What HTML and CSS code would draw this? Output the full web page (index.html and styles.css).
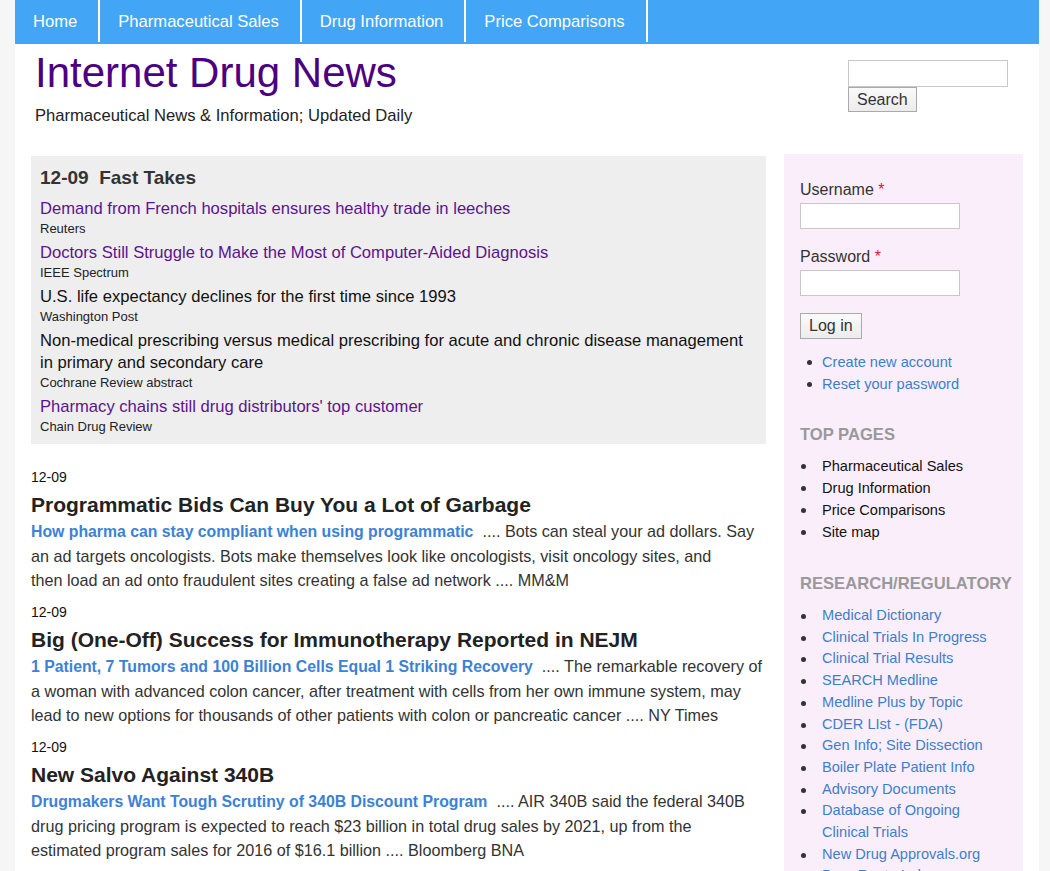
FILE: index.html
```html
<!DOCTYPE html>
<html lang="en">
<head>
<meta charset="utf-8">
<title>Internet Drug News</title>
<link rel="stylesheet" href="styles.css">
</head>
<body>
<div class="page">
  <nav class="topnav">
    <a class="nav-item" href="#">Home</a>
    <a class="nav-item" href="#">Pharmaceutical Sales</a>
    <a class="nav-item" href="#">Drug Information</a>
    <a class="nav-item" href="#">Price Comparisons</a>
  </nav>
  <header class="header">
    <div class="branding">
      <h1 class="site-name">Internet Drug News</h1>
      <p class="slogan">Pharmaceutical News &amp; Information; Updated Daily</p>
    </div>
    <form class="search">
      <input class="search-input" type="text">
      <button class="btn btn-search" type="button">Search</button>
    </form>
  </header>
  <div class="layout">
    <main class="main">
      <section class="fast-takes">
        <h2 class="ft-title">12-09&nbsp;&nbsp;Fast Takes</h2>
        <div class="ft-item">
          <a class="ft-link visited" href="#">Demand from French hospitals ensures healthy trade in leeches</a>
          <div class="ft-source">Reuters</div>
        </div>
        <div class="ft-item">
          <a class="ft-link visited" href="#">Doctors Still Struggle to Make the Most of Computer-Aided Diagnosis</a>
          <div class="ft-source">IEEE Spectrum</div>
        </div>
        <div class="ft-item">
          <a class="ft-link plain" href="#">U.S. life expectancy declines for the first time since 1993</a>
          <div class="ft-source">Washington Post</div>
        </div>
        <div class="ft-item">
          <a class="ft-link plain" href="#">Non-medical prescribing versus medical prescribing for acute and chronic disease management in primary and secondary care</a>
          <div class="ft-source">Cochrane Review abstract</div>
        </div>
        <div class="ft-item">
          <a class="ft-link visited" href="#">Pharmacy chains still drug distributors' top customer</a>
          <div class="ft-source">Chain Drug Review</div>
        </div>
      </section>

      <article class="story">
        <div class="story-date">12-09</div>
        <h3 class="story-title">Programmatic Bids Can Buy You a Lot of Garbage</h3>
        <p class="story-body"><a class="story-link" href="#">How pharma can stay compliant when using programmatic</a>&nbsp; .... Bots can steal your ad dollars. Say<br>an ad targets oncologists. Bots make themselves look like oncologists, visit oncology sites, and<br>then load an ad onto fraudulent sites creating a false ad network .... MM&amp;M</p>
      </article>
      <article class="story">
        <div class="story-date">12-09</div>
        <h3 class="story-title">Big (One-Off) Success for Immunotherapy Reported in NEJM</h3>
        <p class="story-body"><a class="story-link" href="#">1 Patient, 7 Tumors and 100 Billion Cells Equal 1 Striking Recovery</a>&nbsp; .... The remarkable recovery of<br>a woman with advanced colon cancer, after treatment with cells from her own immune system, may<br>lead to new options for thousands of other patients with colon or pancreatic cancer .... NY Times</p>
      </article>
      <article class="story">
        <div class="story-date">12-09</div>
        <h3 class="story-title">New Salvo Against 340B</h3>
        <p class="story-body"><a class="story-link" href="#">Drugmakers Want Tough Scrutiny of 340B Discount Program</a>&nbsp; .... AIR 340B said the federal 340B<br>drug pricing program is expected to reach $23 billion in total drug sales by 2021, up from the<br>estimated program sales for 2016 of $16.1 billion .... Bloomberg BNA</p>
      </article>
    </main>

    <aside class="sidebar">
      <form class="login">
        <label class="field-label">Username <span class="req">*</span></label>
        <input class="field-input" type="text">
        <label class="field-label">Password <span class="req">*</span></label>
        <input class="field-input" type="password">
        <button class="btn btn-login" type="button">Log in</button>
      </form>
      <ul class="side-list narrow">
        <li><a class="side-link" href="#">Create new account</a></li>
        <li><a class="side-link" href="#">Reset your password</a></li>
      </ul>

      <h2 class="side-heading">TOP PAGES</h2>
      <ul class="side-list top-list">
        <li><a class="side-link dark" href="#">Pharmaceutical Sales</a></li>
        <li><a class="side-link dark" href="#">Drug Information</a></li>
        <li><a class="side-link dark" href="#">Price Comparisons</a></li>
        <li><a class="side-link dark" href="#">Site map</a></li>
      </ul>

      <h2 class="side-heading research">RESEARCH/REGULATORY</h2>
      <ul class="side-list research-list">
        <li><a class="side-link" href="#">Medical Dictionary</a></li>
        <li><a class="side-link" href="#">Clinical Trials In Progress</a></li>
        <li><a class="side-link" href="#">Clinical Trial Results</a></li>
        <li><a class="side-link" href="#">SEARCH Medline</a></li>
        <li><a class="side-link" href="#">Medline Plus by Topic</a></li>
        <li><a class="side-link" href="#">CDER LIst - (FDA)</a></li>
        <li><a class="side-link" href="#">Gen Info; Site Dissection</a></li>
        <li><a class="side-link" href="#">Boiler Plate Patient Info</a></li>
        <li><a class="side-link" href="#">Advisory Documents</a></li>
        <li><a class="side-link" href="#">Database of Ongoing Clinical Trials</a></li>
        <li><a class="side-link" href="#">New Drug Approvals.org</a></li>
        <li><a class="side-link" href="#">Drug Route Index</a></li>
      </ul>
    </aside>
  </div>
</div>
</body>
</html>
```
FILE: styles.css
```css
* { box-sizing: border-box; }

html, body {
  margin: 0;
  padding: 0;
}

body {
  background: #f6f6f6;
  font-family: "Liberation Sans", Arial, sans-serif;
  color: #222;
  font-size: 16px;
}

.page {
  width: 1024px;
  margin-left: 15px;
  background: #fff;
  min-height: 900px;
}

/* nav */
.topnav {
  display: flex;
  height: 44px;
  background: #42a5f5;
}

.nav-item {
  display: flex;
  align-items: center;
  padding: 1px 21px 0 18px;
  color: #fff;
  text-decoration: none;
  font-size: 16.6px;
  border-right: 2px solid #fff;
  height: 42px;
}

/* header */
.header {
  display: flex;
  justify-content: space-between;
  padding: 0 31px 0 20px;
  height: 110px;
}

.site-name {
  margin: 3px 0 0;
  font-size: 42px;
  font-weight: normal;
  color: #4b0082;
  line-height: 52px;
}

.slogan {
  margin: 7px 0 0;
  font-size: 16.6px;
  line-height: 20px;
  color: #222;
}

.search {
  display: flex;
  flex-direction: column;
  align-items: flex-start;
  padding-top: 16px;
}

.search-input {
  width: 160px;
  height: 27px;
  border: 1px solid #c8c8c8;
  margin: 0;
}

.btn {
  font-family: "Liberation Sans", Arial, sans-serif;
  font-size: 16px;
  line-height: 18px;
  color: #333;
  background: linear-gradient(#fafafa, #ececec);
  border: 1px solid #aaa;
  padding: 3px 8px;
  margin: 0;
}

.btn-search {
  height: 25px;
  padding: 2px 8px;
}

/* layout */
.layout {
  display: flex;
  align-items: flex-start;
  gap: 18px;
  padding: 0 16px;
}

.main {
  width: 735px;
  flex: none;
}

.fast-takes {
  background: #eeeeee;
  padding: 10px 9px 8px;
  margin-top: 2px;
}

.ft-title {
  margin: 0 0 8px;
  font-size: 19px;
  font-weight: bold;
  color: #333;
  line-height: 24px;
}

.ft-item {
  margin-bottom: 4px;
}

.ft-item:last-child { margin-bottom: 0; }

.ft-link {
  display: block;
  font-size: 16.6px;
  line-height: 22px;
  text-decoration: none;
}

.ft-link.visited { color: #5b1390; }
.ft-link.plain { color: #111; }

.ft-source {
  font-size: 13px;
  color: #222;
  line-height: 18px;
}

.story {
  margin-top: 23px;
}

.story + .story { margin-top: 10px; }

.story-date {
  font-size: 14px;
  color: #111;
  line-height: 20px;
}

.story-title {
  margin: 4px 0 0;
  font-size: 21px;
  font-weight: bold;
  color: #222;
  line-height: 28px;
}

.story-body {
  margin: 0;
  font-size: 16.2px;
  line-height: 24px;
  color: #333;
}

.story-link {
  font-size: 15.8px;
  color: #3b82d6;
  font-weight: bold;
  text-decoration: none;
}

/* sidebar */
.sidebar {
  width: 239px;
  flex: none;
  background: #fbeefb;
  padding: 25px 16px 20px;
  min-height: 760px;
}

.login {
  display: flex;
  flex-direction: column;
  align-items: flex-start;
}

.field-label {
  font-size: 16px;
  color: #333;
  line-height: 22px;
  margin-bottom: 2px;
}

.req { color: #e0103c; }

.field-input {
  width: 160px;
  height: 26px;
  border: 1px solid #c8c8c8;
  background: #fff;
  margin: 0 0 17px;
}

.btn-login {
  height: 26px;
}

.side-list {
  list-style: none;
  margin: 0;
  padding: 0;
  font-size: 14.6px;
  line-height: 22px;
}

.side-list li {
  display: flex;
  align-items: flex-start;
}

.side-list li::before {
  content: "";
  flex: none;
  width: 5px;
  height: 5px;
  border-radius: 50%;
  background: #333;
  margin-top: 9px;
}

.side-list.narrow { margin-top: 12px; }
.side-list.narrow li::before { margin-left: 7px; margin-right: 10px; }

.side-list.top-list { margin-top: 9px; }
.side-list.research-list { margin-top: 10px; line-height: 21.7px; }
.side-list.top-list li::before,
.side-list.research-list li::before { margin-left: 1px; margin-right: 16px; }

.side-link {
  color: #3b7fcc;
  text-decoration: none;
}

.side-link.dark { color: #111; }

.side-heading {
  margin: 29px 0 0;
  font-size: 16.6px;
  font-weight: bold;
  color: #999;
  line-height: 22px;
}

.side-heading.research { margin-top: 30px; }
```
